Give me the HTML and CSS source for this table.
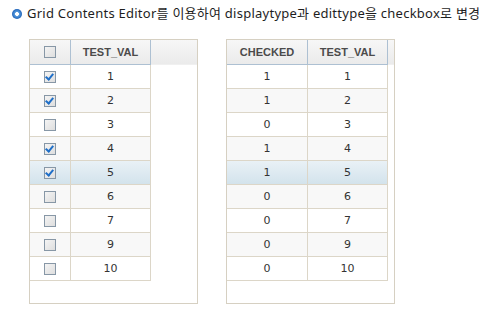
FILE: index.html
```html
<!DOCTYPE html>
<html lang="ko">
<head>
<meta charset="utf-8">
<link rel="stylesheet" href="styles.css">
</head>
<body>
<h1 class="title"><span class="bullet"></span>Grid Contents Editor를 이용하여 displaytype과 edittype을 checkbox로 변경</h1>
<div class="grids">
  <div class="grid">
    <table>
      <thead>
        <tr><th class="c1"><span class="cb"></span></th><th class="c2">TEST_VAL</th><th class="fill"></th></tr>
      </thead>
      <tbody>
        <tr><td class="c1"><span class="cb on"></span></td><td class="c2">1</td><td class="fill"></td></tr>
        <tr class="alt"><td class="c1"><span class="cb on"></span></td><td class="c2">2</td><td class="fill"></td></tr>
        <tr><td class="c1"><span class="cb"></span></td><td class="c2">3</td><td class="fill"></td></tr>
        <tr class="alt"><td class="c1"><span class="cb on"></span></td><td class="c2">4</td><td class="fill"></td></tr>
        <tr class="sel"><td class="c1"><span class="cb on"></span></td><td class="c2">5</td><td class="fill"></td></tr>
        <tr class="alt"><td class="c1"><span class="cb"></span></td><td class="c2">6</td><td class="fill"></td></tr>
        <tr><td class="c1"><span class="cb"></span></td><td class="c2">7</td><td class="fill"></td></tr>
        <tr class="alt"><td class="c1"><span class="cb"></span></td><td class="c2">9</td><td class="fill"></td></tr>
        <tr><td class="c1"><span class="cb"></span></td><td class="c2">10</td><td class="fill"></td></tr>
      </tbody>
    </table>
  </div>
  <div class="grid right">
    <table>
      <thead>
        <tr><th class="c1">CHECKED</th><th class="c2">TEST_VAL</th><th class="fill"></th></tr>
      </thead>
      <tbody>
        <tr><td class="c1">1</td><td class="c2">1</td><td class="fill"></td></tr>
        <tr class="alt"><td class="c1">1</td><td class="c2">2</td><td class="fill"></td></tr>
        <tr><td class="c1">0</td><td class="c2">3</td><td class="fill"></td></tr>
        <tr class="alt"><td class="c1">1</td><td class="c2">4</td><td class="fill"></td></tr>
        <tr class="sel"><td class="c1">1</td><td class="c2">5</td><td class="fill"></td></tr>
        <tr class="alt"><td class="c1">0</td><td class="c2">6</td><td class="fill"></td></tr>
        <tr><td class="c1">0</td><td class="c2">7</td><td class="fill"></td></tr>
        <tr class="alt"><td class="c1">0</td><td class="c2">9</td><td class="fill"></td></tr>
        <tr><td class="c1">0</td><td class="c2">10</td><td class="fill"></td></tr>
      </tbody>
    </table>
  </div>
</div>
</body>
</html>
```
FILE: styles.css
```css
html, body { margin: 0; padding: 0; background: #fff; }
body {
  font-family: "Noto Sans", "Noto Sans CJK KR", sans-serif;
  color: #333;
}
.title {
  margin: 0;
  padding: 5px 0 0 12px;
  height: 39px;
  box-sizing: border-box;
  font-size: 13px;
  font-weight: normal;
  line-height: 16px;
  color: #1e1e1e;
  display: flex;
  align-items: flex-start;
  white-space: nowrap;
  letter-spacing: 0.25px;
}
.bullet {
  width: 10px;
  height: 10px;
  border-radius: 50%;
  background: radial-gradient(circle at 50% 50%, #fff 0, #fff 1.6px, #5a9ee0 2.2px, #1d62b8 5px);
  margin: 4px 5px 0 0;
  flex: none;
}
.grids {
  display: flex;
  gap: 28px;
  padding-left: 29px;
}
.grid {
  width: 167px;
  height: 263px;
  border: 1px solid #d6d0c2;
  background: #fff;
}
table {
  border-collapse: separate;
  border-spacing: 0;
  width: 167px;
  table-layout: fixed;
  font-family: "DejaVu Sans", sans-serif;
  font-size: 11px;
}
th {
  height: 24px;
  padding: 0;
  background: linear-gradient(#f7f7f7, #ebebeb);
  border-bottom: 1px solid #adc0d2;
  border-right: 1px solid #adc0d2;
  font-family: "Liberation Sans", sans-serif;
  font-size: 11px;
  font-weight: bold;
  color: #4b4b4b;
  text-align: center;
  vertical-align: middle;
}
th.fill { border-right: none; border-bottom: 1px solid #f0f0f0; }
td {
  height: 23px;
  padding: 0;
  border-bottom: 1px solid #dcd6c8;
  border-right: 1px solid #dcd6c8;
  text-align: center;
  vertical-align: middle;
  color: #333;
}
td.fill { border: none; background: #fff !important; }
tr.alt td { background: #f8f8f8; }
tr.sel td { background: linear-gradient(#e9f1f6, #d3e3ec); }
.c1 { width: 40px; }
.c2 { width: 79px; }
.right .c1 { width: 80px; }
.right .c2 { width: 79px; }
.cb {
  display: inline-block;
  width: 10px;
  height: 10px;
  border: 1px solid #8797a6;
  background: linear-gradient(135deg, #f4f4f4, #dedede);
  vertical-align: middle;
  position: relative;
  margin-top: -1px;
}
.cb.on::after {
  content: "";
  position: absolute;
  left: 2px;
  top: 0px;
  width: 3px;
  height: 6px;
  border-right: 2px solid #1f6fc8;
  border-bottom: 2px solid #1f6fc8;
  transform: rotate(40deg);
}
```
